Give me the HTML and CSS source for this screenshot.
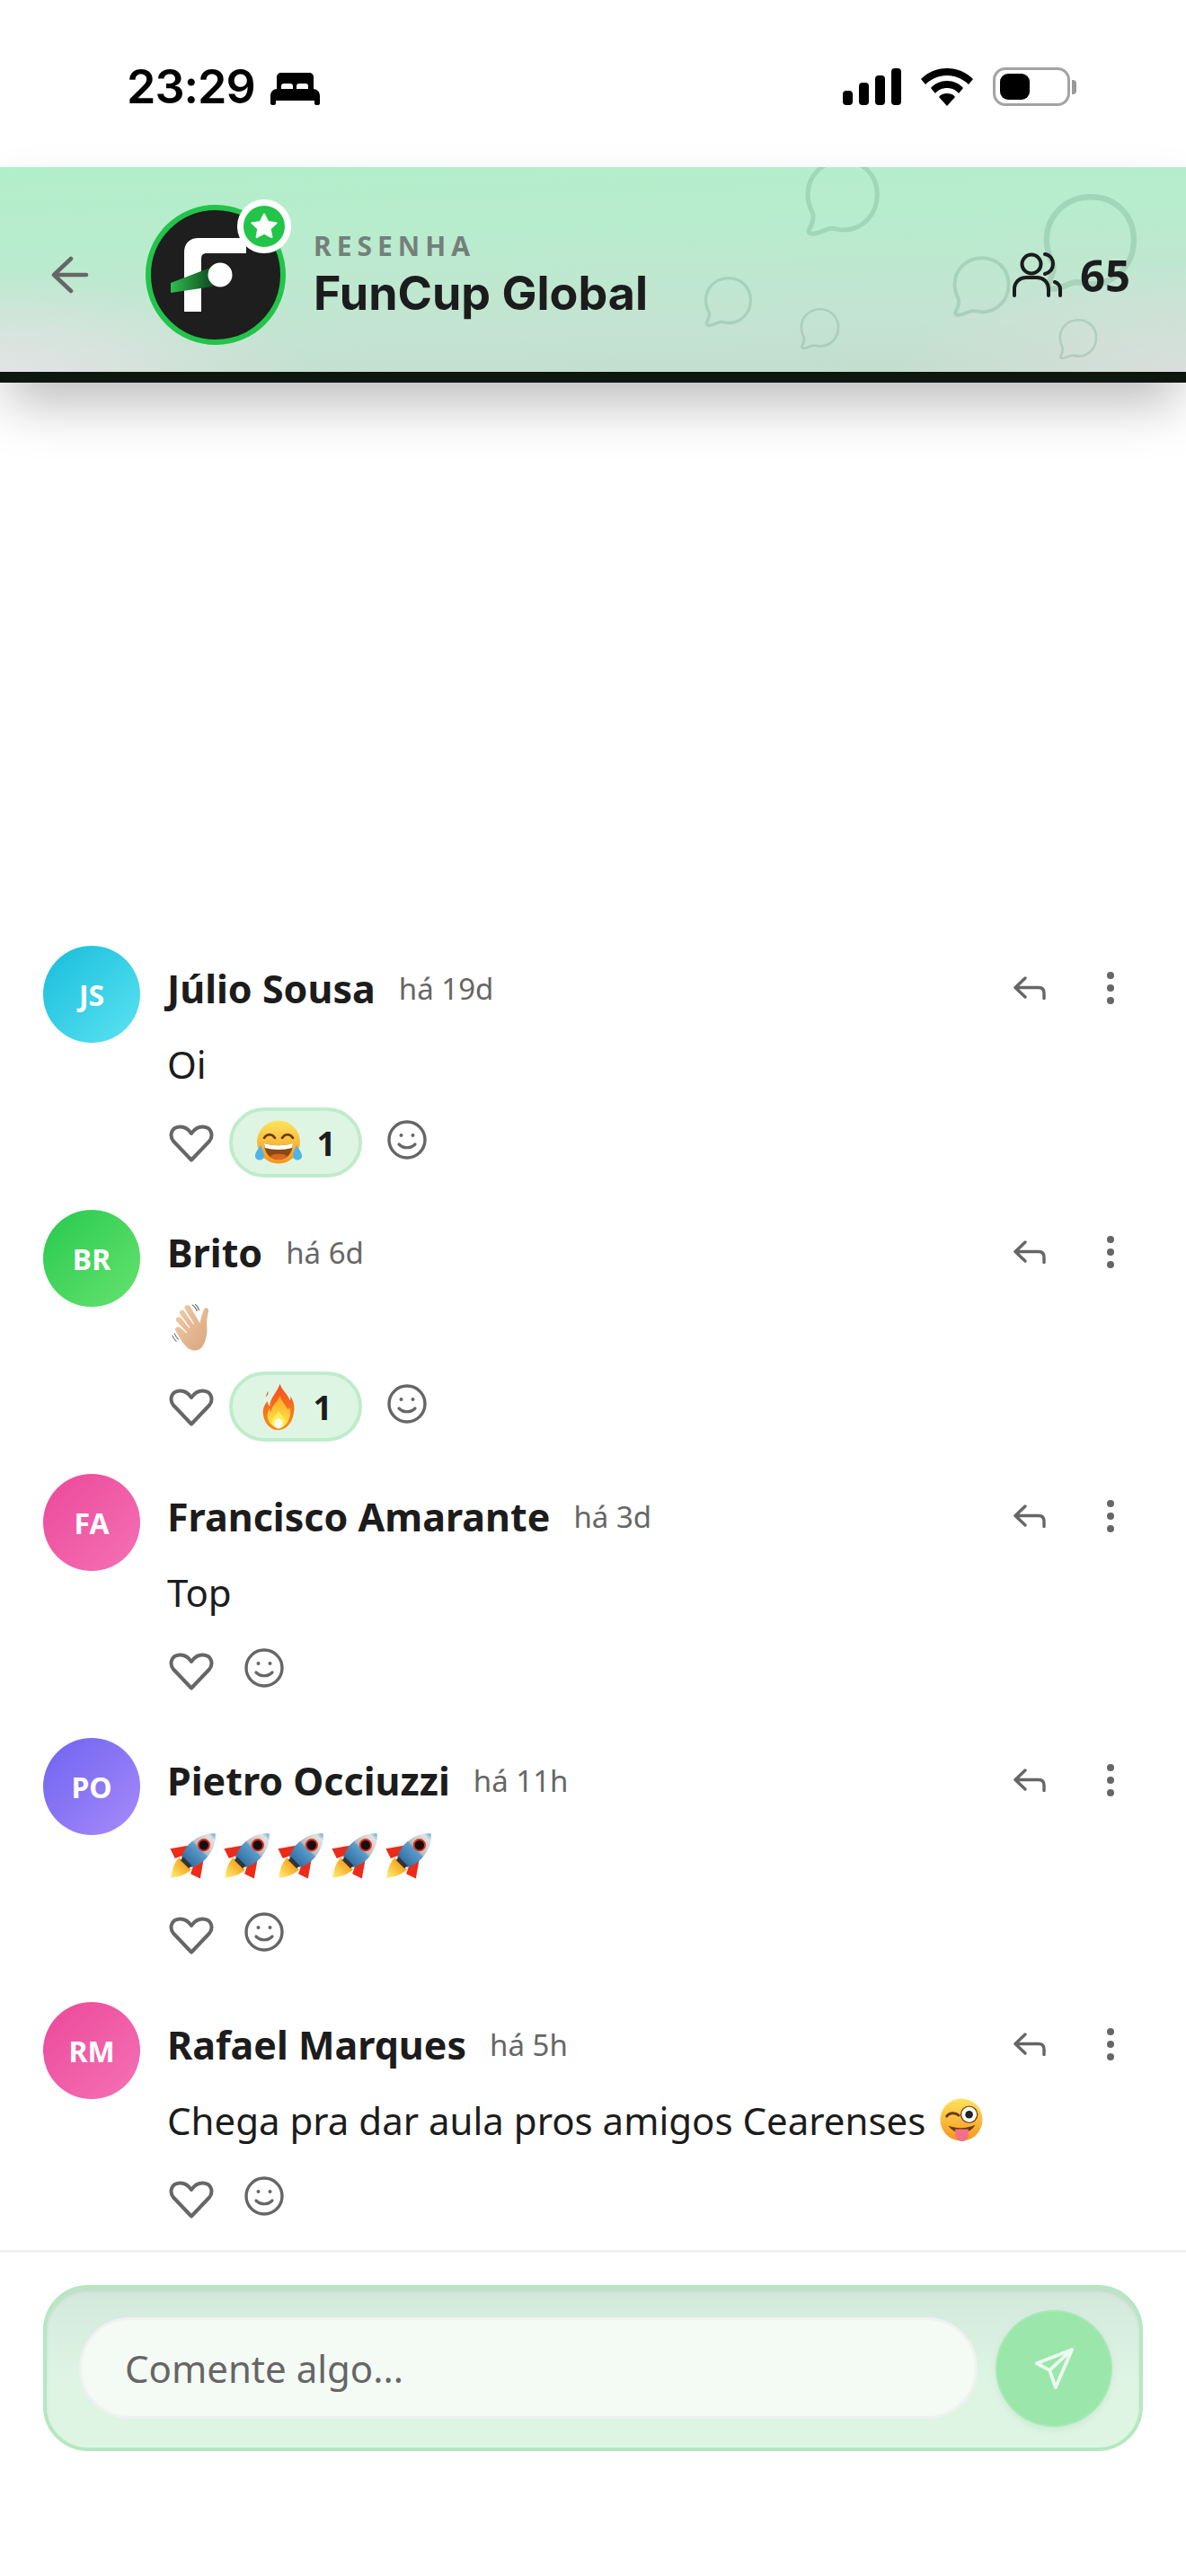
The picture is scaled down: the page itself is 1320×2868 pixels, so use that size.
FILE: index.html
```html
<!DOCTYPE html>
<html lang="pt">
<head>
    <meta charset="utf-8">
    <title>FunCup Global - Resenha</title>
    <link rel="stylesheet" href="styles.css">
</head>
<body>
<svg class="sprite" aria-hidden="true">
    <defs>
        <linearGradient id="gFace" x1="0" y1="0" x2="0" y2="1">
            <stop offset="0" stop-color="#ffe35c"/>
            <stop offset="1" stop-color="#f5961e"/>
        </linearGradient>
        <linearGradient id="gFlame" x1="0" y1="0" x2="0" y2="1">
            <stop offset="0" stop-color="#f4511e"/>
            <stop offset="1" stop-color="#fb8c1e"/>
        </linearGradient>
        <linearGradient id="gFlameIn" x1="0" y1="0" x2="0" y2="1">
            <stop offset="0" stop-color="#ffa726"/>
            <stop offset="1" stop-color="#ffe94d"/>
        </linearGradient>
        <linearGradient id="gHand" x1="0" y1="0" x2="1" y2="1">
            <stop offset="0" stop-color="#f0cda8"/>
            <stop offset="1" stop-color="#d9a47c"/>
        </linearGradient>
        <linearGradient id="gBody" x1="0" y1="0" x2="0" y2="1">
            <stop offset="0" stop-color="#5aa6dc"/>
            <stop offset="0.14" stop-color="#e2e2e2"/>
            <stop offset="0.5" stop-color="#bcbcbc"/>
            <stop offset="0.56" stop-color="#5b9ccc"/>
            <stop offset="1" stop-color="#2f6d9e"/>
        </linearGradient>
        <linearGradient id="gJet" x1="0" y1="0" x2="0" y2="1">
            <stop offset="0" stop-color="#f7a51c"/>
            <stop offset="1" stop-color="#fff07a"/>
        </linearGradient>
        <linearGradient id="gWedge" x1="0" y1="0" x2="1" y2="0">
            <stop offset="0" stop-color="#2fbd4e"/>
            <stop offset="1" stop-color="#0f4a20"/>
        </linearGradient>

        <symbol id="bubble" viewBox="0 0 64 64">
            <path d="M33 3C17 3 5 15 5 30c0 6 2 11 4 15 1 3-1 9-3 13-1 2 1 3 3 3 4 0 9-3 13-4 3-1 7 1 11 1 15 0 27-12 27-28S48 3 33 3Z" fill="none" stroke="currentColor" stroke-width="3.6" stroke-linejoin="round"/>
        </symbol>
        <symbol id="heart" viewBox="0 0 50 42">
            <path d="M25 39.5 5 18.5C0.5 13 2 3 12 2.5c6-.3 10 3 13 7.5 3-4.5 7-7.8 13-7.5 10 .5 11.5 10.5 7 16Z" fill="none" stroke="currentColor" stroke-width="4" stroke-linejoin="round"/>
        </symbol>
        <symbol id="smile" viewBox="0 0 44 44">
            <circle cx="22" cy="22" r="20" fill="none" stroke="currentColor" stroke-width="3.4"/>
            <circle cx="15.5" cy="17" r="2" fill="currentColor"/>
            <circle cx="28.5" cy="17" r="2" fill="currentColor"/>
            <path d="M13 27c5 5 13 5 18 0" fill="none" stroke="currentColor" stroke-width="3.2" stroke-linecap="round"/>
        </symbol>
        <symbol id="reply" viewBox="0 0 36 26">
            <path d="M13 2 2 12.5 13 23M2 12.5h26c4 0 6 2.5 6 6v6" fill="none" stroke="currentColor" stroke-width="3.4" stroke-linecap="round" stroke-linejoin="round"/>
        </symbol>
        <symbol id="dots" viewBox="0 0 8 36">
            <circle cx="4" cy="4" r="4" fill="currentColor"/>
            <circle cx="4" cy="18" r="4" fill="currentColor"/>
            <circle cx="4" cy="32" r="4" fill="currentColor"/>
        </symbol>

        <symbol id="e-laugh" viewBox="0 0 52 50">
            <circle cx="26" cy="24.5" r="24" fill="url(#gFace)"/>
            <path d="M10 20c3-5 9-5 12 0M30 20c3-5 9-5 12 0" fill="none" stroke="#6b3a0c" stroke-width="2.6" stroke-linecap="round"/>
            <path d="M10 26c10 3 22 3 32 0 0 11-7 18-16 18S10 37 10 26Z" fill="#8a4a10"/>
            <path d="M10 26c10 3 22 3 32 0l-.8 5c-10 2.5-20 2.5-30.4 0Z" fill="#fff"/>
            <path d="M17 40c3-3 15-3 18 0-2 3-5 4-9 4s-7-1-9-4Z" fill="#d9662a"/>
            <path d="M6 28c-3 5-6 8-6 12 0 6 10 6 10 0 0-3-2-7-4-12ZM46 28c3 5 6 8 6 12 0 6-10 6-10 0 0-3 2-7 4-12Z" fill="#4fb3e8"/>
        </symbol>
        <symbol id="e-fire" viewBox="0 0 44 66">
            <path d="M24 1c2 8 10 13 14 23 1-2 1-5 0-7 5 7 7 16 5 25-2 13-11 23-21 23S3 57 1 45c-2-9 2-16 6-20 0 3 1 6 3 7C9 22 20 13 24 1Z" fill="url(#gFlame)"/>
            <path d="M7 11c-1 4-2 6-3 8 2-1 5-4 3-8Z" fill="#f4511e"/>
            <path d="M24 17c1 7 8 12 11 20 1-1 2-3 2-4 2 6 2 11 0 15-2 8-8 14-15 14S9 56 7 49c-1-6 0-11 3-14 0 3 1 4 2 5 0-9 9-14 12-23Z" fill="url(#gFlameIn)"/>
            <path d="M22 38c2 5 9 9 9 16 0 5-4 8-9 8s-9-3-9-8c0-7 7-11 9-16Z" fill="#ffee58"/>
            <ellipse cx="22" cy="56" rx="6" ry="7" fill="#fffde7"/>
        </symbol>
        <symbol id="e-wave" viewBox="0 0 54 66">
            <path d="M11 14c-3-4 3-8 6-4l13 19 1-1L18 7c-3-5 4-8 7-4l14 24c1-6 4-15 6-20 2-3 7-2 6 3-1 7-3 13-2 22 1 14-4 31-14 33-10 2-15-4-21-12L5 38c-3-4 2-8 6-5l9 8 1-1L6 24c-3-4 2-8 6-5l12 15 1-1Z" fill="url(#gHand)"/>
            <path d="M3 41c1 3 3 6 6 9M0 44c1 3 3 6 6 9M28 1c3 2 6 5 7 9M32 0c3 2 5 5 6 9" fill="none" stroke="#666" stroke-width="1.3"/>
        </symbol>
        <symbol id="e-rocket" viewBox="0 0 54 54">
            <g transform="rotate(45 27 26)">
                <path d="M16 20 2 40l12 4 5-10Z" fill="#ee2a18"/>
                <path d="M38 20 52 40l-12 4-5-10Z" fill="#ee2a18"/>
                <path d="M17 40c0 10 5 17 10 24 5-7 10-14 10-24Z" fill="url(#gJet)"/>
                <path d="M27 -10C42 2 43 26 35 38H19C11 26 12 2 27 -10Z" fill="url(#gBody)"/>
                <circle cx="27" cy="9" r="6.5" fill="#111" stroke="#e8281a" stroke-width="2"/>
                <rect x="20" y="36" width="14" height="5" fill="#333"/>
            </g>
        </symbol>
        <symbol id="e-wink" viewBox="0 0 50 52">
            <circle cx="25" cy="26" r="24.5" fill="url(#gFace)"/>
            <path d="M8 22c3-4 9-5 14-1" fill="none" stroke="#6b3a0c" stroke-width="3" stroke-linecap="round"/>
            <circle cx="34" cy="20" r="9.500" fill="#fff" stroke="#7a4a10" stroke-width="1.5"/>
            <circle cx="34" cy="20" r="4.5" fill="#222"/>
            <path d="M10 33c10 4 22 3 31-1-3 6-9 9-16 9-6 0-12-3-15-8Z" fill="#6b3a0c"/>
            <path d="M18 37h15c1 7 0 14-7 14s-9-7-8-14Z" fill="#f0708c"/>
        </symbol>
    </defs>
</svg>

<div class="page">
    <div class="status-bar">
        <div class="status-left">
            <span class="clock">23:29</span>
            <svg class="bed" viewBox="0 0 55 37">
                <path d="M7 21V6c0-3 2-5 5-5h31c3 0 5 2 5 5v15h-6v-5c0-2-1-3-3-3h-7c-2 0-3 1-3 3v5h-4v-5c0-2-1-3-3-3h-7c-2 0-3 1-3 3v5Z" fill="#000"/>
                <path d="M8 19h39c5 0 8 3 8 8v8c0 1-1 2-2 2h-2c-1 0-2-1-2-2v-3H6v3c0 1-1 2-2 2H2c-1 0-2-1-2-2v-8c0-5 3-8 8-8Z" fill="#000"/>
            </svg>
        </div>
        <div class="status-right">
            <div class="signal">
                <span class="bar bar-1"></span>
                <span class="bar bar-2"></span>
                <span class="bar bar-3"></span>
                <span class="bar bar-4"></span>
            </div>
            <svg class="wifi" viewBox="0 0 58 42">
                <path d="M29 0C18 0 8 4 0 12l5 6c6-6 15-10 24-10s18 4 24 10l5-6C50 4 40 0 29 0Z" fill="#000"/>
                <path d="M29 14c-7 0-14 3-18 8l5 6c3-4 8-6 13-6s10 2 13 6l5-6c-4-5-11-8-18-8Z" fill="#000"/>
                <path d="M29 28c-4 0-7 1-9 4l9 10 9-10c-2-3-5-4-9-4Z" fill="#000"/>
            </svg>
            <div class="battery">
                <div class="battery-case"><div class="battery-level"></div></div>
                <div class="battery-cap"></div>
            </div>
        </div>
    </div>

    <header class="topic-header">
        <svg class="deco deco-1"><use href="#bubble"/></svg>
        <svg class="deco deco-2"><use href="#bubble"/></svg>
        <svg class="deco deco-3"><use href="#bubble"/></svg>
        <svg class="deco deco-4"><use href="#bubble"/></svg>
        <svg class="deco deco-5"><use href="#bubble"/></svg>
        <svg class="deco deco-6"><use href="#bubble"/></svg>

        <svg class="back" viewBox="0 0 42 42">
            <path d="M22 3 3 21l19 18M3 21h36" fill="none" stroke="currentColor" stroke-width="4.5" stroke-linecap="round" stroke-linejoin="round"/>
        </svg>
        <div class="logo-wrap">
            <svg class="logo" viewBox="0 0 156 156">
                <circle cx="78" cy="78" r="75" fill="#1e1e1e" stroke="#22c44a" stroke-width="6"/>
                <path d="M43 119V53c0-10 6-16 16-16h53v17H68c-4 0-6 2-6 6v59Z" fill="#fff"/>
                <path d="M28 87 72 70l3 21-47 7Z" fill="url(#gWedge)"/>
                <circle cx="83" cy="78" r="13.5" fill="#fff"/>
            </svg>
            <div class="star-badge">
                <svg viewBox="0 0 24 24"><path d="M12 2.5l2.9 6 6.6.9-4.8 4.6 1.2 6.5L12 17.3l-5.900 3.200 1.200-6.500L2.500 9.400l6.600-.9Z" fill="#fff" stroke="#fff" stroke-width="1.5" stroke-linejoin="round"/></svg>
            </div>
        </div>
        <div class="topic-title">
            <div class="eyebrow">RESENHA</div>
            <h1>FunCup Global</h1>
        </div>
        <div class="members">
            <svg viewBox="0 0 55 50">
                <circle cx="21" cy="13" r="10.5" fill="none" stroke="currentColor" stroke-width="4"/>
                <path d="M2 48v-7c0-8 6-13 13-13h12c7 0 13 5 13 13v7M36 2c6 1 9 6 9 11s-3 9-9 11M47 33c3 1 6 4 6 8v7" fill="none" stroke="currentColor" stroke-width="4" stroke-linecap="round"/>
            </svg>
            <span>65</span>
        </div>
    </header>

    <main class="feed">
        <article class="comment">
            <div class="avatar avatar-cyan">JS</div>
            <div class="comment-body">
                <div class="comment-head">
                    <span class="author">Júlio Sousa</span>
                    <span class="ago">há 19d</span>
                    <svg class="ic-reply"><use href="#reply"/></svg>
                    <svg class="ic-dots"><use href="#dots"/></svg>
                </div>
                <div class="comment-text">Oi</div>
                <div class="comment-actions">
                    <svg class="ic-heart"><use href="#heart"/></svg>
                    <div class="reaction"><svg class="em-laugh"><use href="#e-laugh"/></svg><span>1</span></div>
                    <svg class="ic-smile"><use href="#smile"/></svg>
                </div>
            </div>
        </article>

        <article class="comment">
            <div class="avatar avatar-green">BR</div>
            <div class="comment-body">
                <div class="comment-head">
                    <span class="author">Brito</span>
                    <span class="ago">há 6d</span>
                    <svg class="ic-reply"><use href="#reply"/></svg>
                    <svg class="ic-dots"><use href="#dots"/></svg>
                </div>
                <div class="comment-text"><svg class="em-wave"><use href="#e-wave"/></svg></div>
                <div class="comment-actions">
                    <svg class="ic-heart"><use href="#heart"/></svg>
                    <div class="reaction"><svg class="em-fire"><use href="#e-fire"/></svg><span>1</span></div>
                    <svg class="ic-smile"><use href="#smile"/></svg>
                </div>
            </div>
        </article>

        <article class="comment">
            <div class="avatar avatar-pink">FA</div>
            <div class="comment-body">
                <div class="comment-head">
                    <span class="author">Francisco Amarante</span>
                    <span class="ago">há 3d</span>
                    <svg class="ic-reply"><use href="#reply"/></svg>
                    <svg class="ic-dots"><use href="#dots"/></svg>
                </div>
                <div class="comment-text">Top</div>
                <div class="comment-actions">
                    <svg class="ic-heart"><use href="#heart"/></svg>
                    <svg class="ic-smile"><use href="#smile"/></svg>
                </div>
            </div>
        </article>

        <article class="comment">
            <div class="avatar avatar-violet">PO</div>
            <div class="comment-body">
                <div class="comment-head">
                    <span class="author">Pietro Occiuzzi</span>
                    <span class="ago">há 11h</span>
                    <svg class="ic-reply"><use href="#reply"/></svg>
                    <svg class="ic-dots"><use href="#dots"/></svg>
                </div>
                <div class="comment-text rockets">
                    <svg class="em-rocket"><use href="#e-rocket"/></svg>
                    <svg class="em-rocket"><use href="#e-rocket"/></svg>
                    <svg class="em-rocket"><use href="#e-rocket"/></svg>
                    <svg class="em-rocket"><use href="#e-rocket"/></svg>
                    <svg class="em-rocket"><use href="#e-rocket"/></svg>
                </div>
                <div class="comment-actions">
                    <svg class="ic-heart"><use href="#heart"/></svg>
                    <svg class="ic-smile"><use href="#smile"/></svg>
                </div>
            </div>
        </article>

        <article class="comment">
            <div class="avatar avatar-pink">RM</div>
            <div class="comment-body">
                <div class="comment-head">
                    <span class="author">Rafael Marques</span>
                    <span class="ago">há 5h</span>
                    <svg class="ic-reply"><use href="#reply"/></svg>
                    <svg class="ic-dots"><use href="#dots"/></svg>
                </div>
                <div class="comment-text">Chega pra dar aula pros amigos Cearenses <svg class="em-wink"><use href="#e-wink"/></svg></div>
                <div class="comment-actions">
                    <svg class="ic-heart"><use href="#heart"/></svg>
                    <svg class="ic-smile"><use href="#smile"/></svg>
                </div>
            </div>
        </article>
    </main>

    <footer class="composer-area">
        <div class="composer">
            <div class="composer-input">Comente algo...</div>
            <div class="send">
                <svg viewBox="0 0 46 48">
                    <path d="M44 2 3 18l15 8 7 20ZM44 2 18 26" fill="none" stroke="currentColor" stroke-width="4" stroke-linecap="round" stroke-linejoin="round"/>
                </svg>
            </div>
        </div>
    </footer>
</div>
</body>
</html>
```

FILE: styles.css
```css
* {
    box-sizing: border-box;
}

body {
    margin: 0;
    background-color: #fff;
    color: #1c1c1c;
    font-family: "Noto Sans", sans-serif;
}

.sprite {
    display: block;
    width: 0;
    height: 0;
    overflow: hidden;
}

.page {
    display: flex;
    flex-direction: column;
    width: 1320px;
    height: 2868px;
    overflow: hidden;
}

/* status bar */
.status-bar {
    display: flex;
    justify-content: space-between;
    align-items: center;
    flex-shrink: 0;
    height: 186px;
    padding: 7px 122px 0 141px;
}

.status-left {
    display: flex;
    align-items: center;
    gap: 17px;
}

.clock {
    font-family: Inter, sans-serif;
    font-size: 52px;
    font-weight: 600;
    letter-spacing: -1px;
    color: #000;
}

.bed {
    width: 55px;
    height: 37px;
    margin-top: 3px;
}

.status-right {
    display: flex;
    align-items: center;
    gap: 22px;
}

.signal {
    display: flex;
    align-items: flex-end;
    gap: 7px;
    height: 41px;
}

.bar {
    width: 11px;
    background-color: #000;
    border-radius: 4px;
}

.bar-1 { height: 16px; }
.bar-2 { height: 25px; }
.bar-3 { height: 33px; }
.bar-4 { height: 41px; }

.wifi {
    width: 58px;
    height: 42px;
}

.battery {
    display: flex;
    align-items: center;
    gap: 2px;
}

.battery-case {
    width: 86px;
    height: 43px;
    padding: 4px 5px;
    border: 3px solid #a3a3a3;
    border-radius: 14px;
}

.battery-level {
    width: 33px;
    height: 100%;
    background-color: #000;
    border-radius: 9px;
}

.battery-cap {
    width: 5px;
    height: 16px;
    background-color: #999;
    border-radius: 0 4px 4px 0;
}

/* header */
.topic-header {
    position: relative;
    display: flex;
    align-items: center;
    flex-shrink: 0;
    height: 240px;
    padding: 11px 62px 0 57px;
    background:
        radial-gradient(ellipse 340px 110px at 0 100%, rgba(232, 228, 232, 0.85), rgba(232, 228, 232, 0)),
        radial-gradient(ellipse 320px 120px at 100% 100%, rgba(226, 224, 226, 0.7), rgba(226, 224, 226, 0)),
        linear-gradient(178deg, #b2efca 0%, #b9ecce 35%, #c4e3d2 75%, #c3dccd 100%);
    border-bottom: 12px solid #0d1710;
    box-shadow: 0 30px 56px -8px rgba(0, 0, 0, 0.27);
    color: #1c1c1c;
}

.deco {
    position: absolute;
    color: rgba(70, 130, 100, 0.2);
}

.deco-1 { left: 892px; top: -13px; width: 90px; height: 93px; clip-path: inset(13px 0 0 0); }
.deco-2 { left: 781px; top: 121px; width: 58px; height: 58px; }
.deco-3 { left: 888px; top: 156px; width: 48px; height: 48px; }
.deco-4 { left: 1057px; top: 98px; width: 70px; height: 70px; }
.deco-5 { left: 1156px; top: 28px; width: 113px; height: 113px; }
.deco-6 { left: 1176px; top: 168px; width: 47px; height: 47px; }

.back {
    position: relative;
    flex-shrink: 0;
    width: 42px;
    height: 42px;
    margin-right: 63px;
    color: #666;
}

.logo-wrap {
    position: relative;
    flex-shrink: 0;
    width: 156px;
    height: 156px;
    margin-right: 31px;
}

.logo {
    display: block;
    width: 156px;
    height: 156px;
}

.star-badge {
    position: absolute;
    top: -6px;
    right: -6px;
    display: flex;
    align-items: center;
    justify-content: center;
    width: 60px;
    height: 60px;
    background-color: #22c44a;
    border: 7px solid #fff;
    border-radius: 50%;
}

.star-badge svg {
    width: 34px;
    height: 34px;
}

.topic-title {
    position: relative;
    flex: 1;
    margin-top: 3px;
}

.eyebrow {
    font-size: 30px;
    font-weight: 700;
    line-height: 40px;
    letter-spacing: 6px;
    color: #74807a;
}

.topic-title h1 {
    margin: 0;
    font-family: Inter, sans-serif;
    font-size: 52px;
    font-weight: 700;
    line-height: 66px;
    letter-spacing: 0;
}

.members {
    position: relative;
    display: flex;
    align-items: center;
    gap: 20px;
}

.members svg {
    width: 55px;
    height: 50px;
}

.members span {
    font-size: 49px;
    font-weight: 700;
}

/* comments */
.feed {
    display: flex;
    flex: 1;
    flex-direction: column;
    justify-content: flex-end;
    gap: 36px;
    padding: 0 48px 18px;
}

.comment {
    display: flex;
    gap: 30px;
}

.avatar {
    display: flex;
    align-items: center;
    justify-content: center;
    flex-shrink: 0;
    width: 108px;
    height: 108px;
    border-radius: 50%;
    font-size: 32px;
    font-weight: 700;
    color: #fff;
}

.avatar-cyan { background: linear-gradient(135deg, #17bddb, #5ce3f2); }
.avatar-green { background: linear-gradient(135deg, #28c94f, #66e36f); }
.avatar-pink { background: linear-gradient(135deg, #ec4899, #f472b6); }
.avatar-violet { background: linear-gradient(135deg, #6f63f0, #a78bfa); }

.comment-body {
    flex: 1;
}

.comment-head {
    display: flex;
    align-items: center;
    gap: 26px;
    height: 94px;
}

.author {
    font-size: 43px;
    font-weight: 700;
}

.ago {
    flex: 1;
    font-size: 33px;
    color: #666;
}

.ic-reply {
    width: 36px;
    height: 26px;
    color: #666;
    margin-right: 42px;
}

.ic-dots {
    width: 8px;
    height: 36px;
    color: #666;
    margin-right: 32px;
}

.comment-text {
    display: flex;
    align-items: center;
    gap: 16px;
    height: 74px;
    font-size: 42px;
}

.rockets {
    gap: 7px;
    padding-left: 3px;
}

.comment-actions {
    display: flex;
    align-items: center;
    gap: 34px;
    height: 78px;
    margin-top: 12px;
    color: #666;
}

.ic-heart {
    width: 50px;
    height: 42px;
    margin-top: 1px;
    margin-left: 2px;
}

.ic-smile {
    width: 44px;
    height: 44px;
    margin-bottom: 6px;
}

.comment-actions .reaction {
    margin: 0 -6px 0 -17px;
}

.reaction {
    display: flex;
    align-items: center;
    justify-content: center;
    gap: 16px;
    width: 148px;
    height: 78px;
    background-color: #dff5e4;
    border: 4px solid #bfeccb;
    border-radius: 39px;
    font-size: 37px;
    font-weight: 700;
    color: #1c1c1c;
}

.em-laugh {
    width: 52px;
    height: 50px;
}

.em-fire {
    width: 44px;
    height: 53px;
}

.em-wave {
    width: 54px;
    height: 52px;
}

.em-rocket {
    width: 53px;
    height: 51px;
}

.em-wink {
    width: 48px;
    height: 50px;
}

/* composer */
.composer-area {
    flex-shrink: 0;
    height: 363px;
    padding: 36px 48px 0;
    border-top: 3px solid #f2f2f3;
}

.composer {
    display: flex;
    align-items: center;
    gap: 22px;
    height: 185px;
    padding: 0 32px 0 36px;
    background: linear-gradient(180deg, #d3e8dc 0%, #d8eee0 25%, #dff5e4 62%);
    border: 4px solid #b5e8c0;
    border-radius: 50px;
    box-shadow: inset 0 3px 3px rgba(150, 170, 160, 0.25);
}

.composer-input {
    flex: 1;
    height: 113px;
    padding-left: 48px;
    background-color: #f4fbf5;
    border: 3px solid #f0f1f0;
    border-radius: 57px;
    font-size: 42px;
    line-height: 107px;
    color: #666;
}

.send {
    display: flex;
    align-items: center;
    justify-content: center;
    flex-shrink: 0;
    width: 126px;
    height: 126px;
    background-color: #9ae6ab;
    border-radius: 50%;
    color: #ecfaef;
    box-shadow: 0 0 0 2px #a6e9b5, 0 4px 10px rgba(120, 190, 140, 0.25);
}

.send svg {
    width: 46px;
    height: 46px;
}
```
